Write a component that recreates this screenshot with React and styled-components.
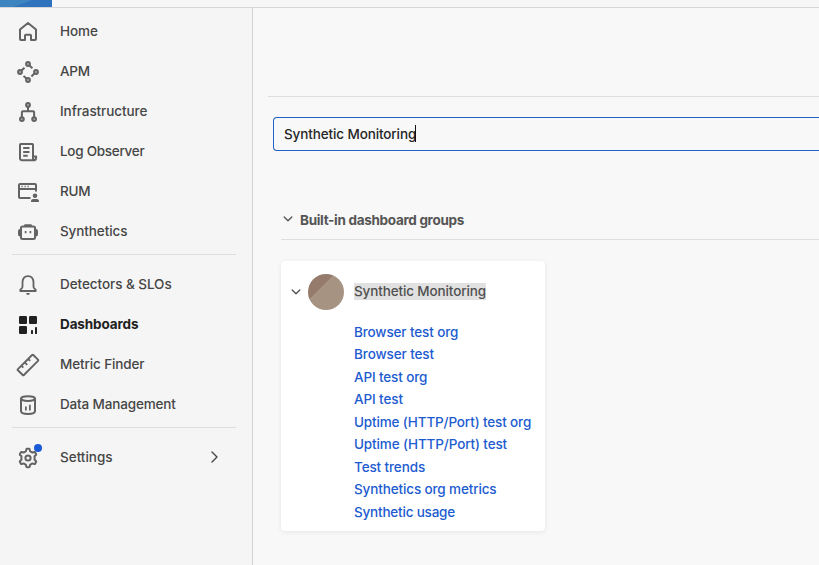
import React from "react";
import styled, { createGlobalStyle } from "styled-components";

const GlobalStyle = createGlobalStyle`
  * { box-sizing: border-box; }
  html, body { margin: 0; padding: 0; overflow: hidden; }
  body { background: #f8f8f8; font-family: Inter, "Liberation Sans", sans-serif; font-size: 14px; font-weight: 500; color: #464646; }
`;

const Page = styled.div`
  width: 100vw;
  height: 100vh;
  display: flex;
  flex-direction: column;
  overflow: hidden;
`;

const TopBar = styled.header`
  height: 8px;
  flex: none;
  background: #f7f7f7;
  border-bottom: 1px solid #d6d6d6;
`;

const Brand = styled.div`
  width: 52px;
  height: 7px;
  background: linear-gradient(160deg, #3c85c0 0 44%, #2f74bd 46%, #2e70bd 100%);
`;

const Body = styled.div`
  flex: 1;
  display: flex;
  min-height: 0;
`;

const Sidebar = styled.nav`
  width: 253px;
  flex: none;
  padding: 3px 16px 0 12px;
  background: #f5f5f5;
  border-right: 1px solid #d4d4d4;
`;

const NavRow = styled.a`
  height: 40px;
  display: flex;
  align-items: center;
  padding: 0 17px 0 4px;
  color: ${(p) => (p.$active ? "#212121" : "#464646")};
  font-weight: ${(p) => (p.$active ? 700 : 500)};
`;

const NavIcon = styled.span`
  position: relative;
  width: 24px;
  height: 24px;
  margin: 2px 20px 0 0;
  color: ${(p) => (p.$active ? "#212121" : "#636363")};
  svg { display: block; }
`;

const Label = styled.span`
  flex: 1;
  white-space: nowrap;
  font-size: 13.5px;
  letter-spacing: ${(p) => p.$track || 0}px;
`;

const Badge = styled.span`
  position: absolute;
  top: -2px;
  right: -2px;
  width: 8px;
  height: 8px;
  border-radius: 50%;
  background: #1a5bd5;
`;

const Divider = styled.hr`
  height: 1px;
  border: 0;
  margin: 3px 0 9px;
  background: #dedede;
`;

const Main = styled.main`
  flex: 1;
  min-width: 0;
  padding: 88px 0 0 15px;
`;

const SearchSection = styled.section`
  border-top: 1px solid #dedede;
  padding: 20px 0 0 5px;
`;

const SearchField = styled.div`
  height: 34px;
  display: flex;
  align-items: center;
  padding-left: 10px;
  border: 1px solid #2360c8;
  border-right: 0;
  border-radius: 4px 0 0 4px;
  color: #262626;
`;

const Query = styled.span`
  margin-right: -1px;
  font-size: 13.5px;
  letter-spacing: -0.12px;
  font-weight: 450;
`;

const Caret = styled.span`
  width: 1px;
  height: 17px;
  margin-bottom: 1px;
  background: #111;
`;

const Groups = styled.section`
  padding: 49px 0 0 13px;
`;

const GroupsHeading = styled.h2`
  height: 40px;
  margin: 0;
  display: flex;
  align-items: center;
  gap: 6px;
  padding-left: 1px;
  border-bottom: 1px solid #dedede;
  color: #555;
  font-size: 13.5px;
  font-weight: 650;
  letter-spacing: -0.3px;
  svg { margin-bottom: 2px; }
`;

const Card = styled.article`
  width: 264px;
  height: 270px;
  margin-top: 21px;
  padding-top: 12px;
  background: #fff;
  border-radius: 4px;
  box-shadow: 0 1px 5px rgba(0, 0, 0, 0.08);
`;

const CardHeader = styled.div`
  height: 38px;
  display: flex;
  align-items: center;
  padding-left: 9px;
`;

const Avatar = styled.span`
  width: 36px;
  height: 36px;
  margin: 0 10px 0 6px;
  border-radius: 50%;
  background: linear-gradient(135deg, #957b6b 0 36.5%, #a69382 37.5% 100%);
`;

const CardTitle = styled.span`
  height: 17px;
  line-height: 17px;
  margin-bottom: 2px;
  background: #e1e1e1;
  color: #505050;
  font-size: 13.5px;
  letter-spacing: -0.13px;
`;

const LinkList = styled.ul`
  list-style: none;
  margin: 9.6px 0 0 73px;
  padding: 0;
`;

const LinkItem = styled.li`
  height: 22.5px;
  line-height: 22.5px;
  color: #1c5bd0;
  font-size: 13.5px;
  white-space: nowrap;
  letter-spacing: ${(p) => p.$track || 0}px;
`;

const Svg = ({ children }) => (
  <svg width="24" height="24" viewBox="0 0 24 24" fill="none" stroke="currentColor" strokeWidth="2" strokeLinejoin="round">
    {children}
  </svg>
);

const icons = {
  home: <Svg><path d="M4 9.600 12 3l8 6.600V19q0 1-1 1h-4v-4.500q0-.8-.8-.8H9.800q-.8 0-.8.800V20H5q-1 0-1-1Z" /></Svg>,
  apm: (
    <Svg>
      <g strokeWidth="2.200"><circle cx="12" cy="4" r="1.800" /><circle cx="4" cy="12" r="1.800" /><circle cx="20" cy="12" r="1.800" /><circle cx="12" cy="20" r="1.800" /></g>
      <path d="M5.500 10.500 8.500 7.700M13.400 5.500l3 2.800M18.400 13.600l-3 2.800M10.500 18.500l-3-2.600" />
    </Svg>
  ),
  infra: (
    <Svg>
      <g strokeWidth="2.200"><circle cx="12" cy="4.900" r="1.800" /><circle cx="5.900" cy="19.100" r="1.800" /><circle cx="18.100" cy="19.100" r="1.800" /></g>
      <path d="M12 7v4.500M5.900 17v-4.800q0-1 1-1h10.200q1 0 1 1V17" />
    </Svg>
  ),
  log: <Svg><path d="M6 20.200Q4 20 4 18.200V4.700Q4 4 4.700 4h11.600q.7 0 .7.700v13.300q0 2 1.800 2.200H6M17 16.400h3.100v1.900q0 1.600-1.500 1.900M7.200 8h6.300M7.200 12h6.300M7.200 15.800h4.500" /></Svg>,
  rum: (
    <Svg>
      <path d="M14.500 18H4.100Q3 18 3 16.900V5q0-1 1.100-1h14.800Q20 4 20 5v6.500M3 8.900h17" />
      <path d="M5.500 6.500h1.200M8.500 6.500h1.200M11.500 6.500h1.200" strokeWidth="1.300" />
      <circle cx="19" cy="15.700" r="2.300" fill="currentColor" stroke="none" />
      <path d="M15 22v-1q0-2 2.200-2h3.600q2.200 0 2.200 2v1Z" fill="currentColor" stroke="none" />
    </Svg>
  ),
  bot: (
    <Svg>
      <rect x="5" y="6.500" width="14" height="12.500" rx="1.500" />
      <path d="M8.200 7V5q0-.8.8-.8h6q.8 0 .8.800v2Z" fill="currentColor" stroke="none" />
      <path d="M5 10H4q-1 0-1 1v3.500q0 1 1 1h1M19 10h1q1 0 1 1v3.500q0 1-1 1h-1" />
      <path d="M9.600 11v2.200M14.400 11v2.200" strokeWidth="1.700" />
    </Svg>
  ),
  bell: <Svg><path d="M4.300 18v-1.200l1.600-1.700q.6-.7.600-1.600V10q0-6.800 5.500-6.800T17.500 10v3.500q0 .9.600 1.600l1.600 1.700V18Z" strokeWidth="1.800" /><path d="M10.200 20h3.600q0 1.900-1.800 1.900T10.200 20Z" fill="currentColor" stroke="none" /></Svg>,
  dash: (
    <Svg>
      <g fill="currentColor" stroke="none">
        <rect x="3" y="3" width="8" height="8" rx="1.300" /><rect x="13" y="3" width="8" height="8" rx="1.300" /><rect x="3" y="13" width="8" height="8" rx="1.300" />
        <rect x="15" y="17" width="2" height="4" rx=".4" /><rect x="19" y="14" width="2" height="7" rx=".4" />
      </g>
    </Svg>
  ),
  ruler: <Svg><path d="M1.900 16.100 16.100 2q.6-.6 1.200 0L22 6.700q.6.600 0 1.200L7.900 22q-.6.600-1.200 0L1.900 17.300q-.6-.6 0-1.200ZM5.300 12.700l2 2M8.700 9.300l2.500 2.500M12.100 5.900l2 2" strokeWidth="1.900" /></Svg>,
  data: <Svg><ellipse cx="12" cy="5.600" rx="7" ry="2.400" /><path d="M5 5.600v12.500q0 2.900 7 2.900t7-2.900V5.600" /><path d="M9.900 13.500v4M13.900 11.800v5.700" strokeWidth="1.700" /></Svg>,
  gear: (
    <Svg>
      <path d="M9.900 5.300 10.300 3.400q.1-.6.700-.6h2q.6 0 .7.600l.4 1.900q1.300.5 2.300 1.300l1.800-.6q.6-.2.900.3l1 1.700q.3.500-.2 1l-1.400 1.300q.3 1.700 0 3.400l1.400 1.300q.5.500.2 1l-1 1.700q-.3.500-.9.300l-1.800-.6q-1 .8-2.300 1.300l-.4 1.900q-.1.600-.7.600h-2q-.6 0-.7-.6l-.4-1.900q-1.300-.5-2.300-1.300l-1.800.6q-.6.2-.9-.3l-1-1.700q-.3-.5.200-1l1.400-1.300q-.3-1.700 0-3.400L4.100 9q-.5-.5-.2-1l1-1.700q.3-.5.900-.3l1.800.6q1-.8 2.300-1.300Z" />
      <circle cx="12" cy="12" r="2.600" />
    </Svg>
  ),
};

const Chevron = () => (
  <svg width="12" height="12" viewBox="0 0 12 12" fill="none" stroke="#505050" strokeWidth="1.300" strokeLinecap="round" strokeLinejoin="round">
    <path d="m2.200 4 3.800 3.800L9.800 4" />
  </svg>
);

const ChevronRight = () => (
  <svg width="10" height="14" viewBox="0 0 10 14" fill="none" stroke="#464646" strokeWidth="1.400" strokeLinecap="round" strokeLinejoin="round">
    <path d="m3 2 5 5-5 5" />
  </svg>
);

const primary = [
  ["home", "Home", -0.05],
  ["apm", "APM", -0.2],
  ["infra", "Infrastructure", -0.07],
  ["log", "Log Observer", -0.28],
  ["rum", "RUM", -0.3],
  ["bot", "Synthetics", -0.1],
];

const secondary = [
  ["bell", "Detectors & SLOs", -0.06],
  ["dash", "Dashboards", -0.12],
  ["ruler", "Metric Finder", -0.12],
  ["data", "Data Management", -0.15],
];

const links = [
  ["Browser test org", -0.13],
  ["Browser test", -0.1],
  ["API test org", -0.13],
  ["API test", -0.1],
  ["Uptime (HTTP/Port) test org", -0.14],
  ["Uptime (HTTP/Port) test", -0.12],
  ["Test trends", -0.12],
  ["Synthetics org metrics", -0.13],
  ["Synthetic usage", -0.2],
];

const NavItem = ({ icon, label, track, active, badge, more }) => (
  <NavRow $active={active}>
    <NavIcon $active={active}>
      {icons[icon]}
      {badge && <Badge />}
    </NavIcon>
    <Label $track={track}>{label}</Label>
    {more && <ChevronRight />}
  </NavRow>
);

export default function App() {
  return (
    <Page>
      <GlobalStyle />
      <TopBar><Brand /></TopBar>
      <Body>
        <Sidebar>
          {primary.map(([icon, label, track]) => <NavItem key={label} icon={icon} label={label} track={track} />)}
          <Divider />
          {secondary.map(([icon, label, track]) => (
            <NavItem key={label} icon={icon} label={label} track={track} active={label === "Dashboards"} />
          ))}
          <Divider />
          <NavItem icon="gear" label="Settings" track={0} badge more />
        </Sidebar>
        <Main>
          <SearchSection>
            <SearchField>
              <Query>Synthetic Monitoring</Query>
              <Caret />
            </SearchField>
          </SearchSection>
          <Groups>
            <GroupsHeading><Chevron />Built-in dashboard groups</GroupsHeading>
            <Card>
              <CardHeader>
                <Chevron />
                <Avatar />
                <CardTitle>Synthetic Monitoring</CardTitle>
              </CardHeader>
              <LinkList>
                {links.map(([text, track]) => <LinkItem key={text} $track={track}>{text}</LinkItem>)}
              </LinkList>
            </Card>
          </Groups>
        </Main>
      </Body>
    </Page>
  );
}
